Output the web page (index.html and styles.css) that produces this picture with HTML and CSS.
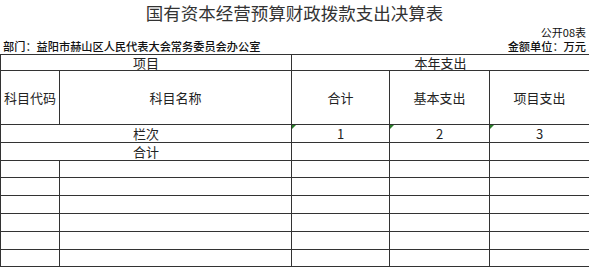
FILE: index.html
```html
<!DOCTYPE html>
<html lang="zh-CN">
<head>
<meta charset="utf-8">
<link rel="stylesheet" href="styles.css">
</head>
<body>
<div class="page">
  <h1 class="title">国有资本经营预算财政拨款支出决算表</h1>
  <div class="code">公开08表</div>
  <div class="meta">
    <span>部门：益阳市赫山区人民代表大会常务委员会办公室</span>
    <span>金额单位：万元</span>
  </div>
  <table class="grid">
    <colgroup>
      <col class="c1"><col class="c2"><col class="c3"><col class="c4"><col class="c5">
    </colgroup>
    <tr class="h1"><td colspan="2">项目</td><td colspan="3">本年支出</td></tr>
    <tr class="h2"><td>科目代码</td><td>科目名称</td><td>合计</td><td>基本支出</td><td>项目支出</td></tr>
    <tr class="r"><td colspan="2">栏次</td><td class="mark">1</td><td class="mark">2</td><td class="mark">3</td></tr>
    <tr class="r"><td colspan="2">合计</td><td></td><td></td><td></td></tr>
    <tr class="r s"><td></td><td></td><td></td><td></td><td></td></tr>
    <tr class="r"><td></td><td></td><td></td><td></td><td></td></tr>
    <tr class="r"><td></td><td></td><td></td><td></td><td></td></tr>
    <tr class="r"><td></td><td></td><td></td><td></td><td></td></tr>
    <tr class="r"><td></td><td></td><td></td><td></td><td></td></tr>
    <tr class="r s"><td></td><td></td><td></td><td></td><td></td></tr>
  </table>
</div>
</body>
</html>
```
FILE: styles.css
```css
* { box-sizing: border-box; }
html, body { margin: 0; padding: 0; background: #fff; }
body {
  font-family: "Noto Sans CJK SC", "Liberation Sans", sans-serif;
  color: #222;
  width: 589px;
  overflow: hidden;
}
.page { display: flex; flex-direction: column; width: 589px; }
.title {
  margin: 0;
  height: 26px;
  line-height: 26px;
  font-size: 17.5px;
  font-weight: normal;
  text-align: center;
  color: #333;
}
.code {
  height: 14px;
  line-height: 12px;
  font-size: 11px;
  text-align: right;
  padding-right: 3px;
  color: #111;
}
.meta {
  display: flex;
  justify-content: space-between;
  height: 14px;
  line-height: 13px;
  font-size: 11.2px;
  font-weight: 500;
  padding: 0 3px;
  color: #111;
}
.grid {
  border-collapse: collapse;
  table-layout: fixed;
  width: 589px;
  font-size: 13px;
}
.grid td {
  border: 1px solid #333;
  padding: 0;
  text-align: center;
  vertical-align: middle;
  line-height: 14px;
  position: relative;
}
.c1 { width: 59px; }
.c2 { width: 232px; }
.c3 { width: 98px; }
.c4 { width: 100px; }
.c5 { width: 100px; }
.h1 td { height: 16px; }
.h2 td { height: 54px; }
.r td { height: 18px; }
.r.s td { height: 17px; }
.mark::before {
  content: "";
  position: absolute;
  left: 0;
  top: 0;
  border-top: 4px solid #2a7d2a;
  border-right: 4px solid transparent;
}
```
